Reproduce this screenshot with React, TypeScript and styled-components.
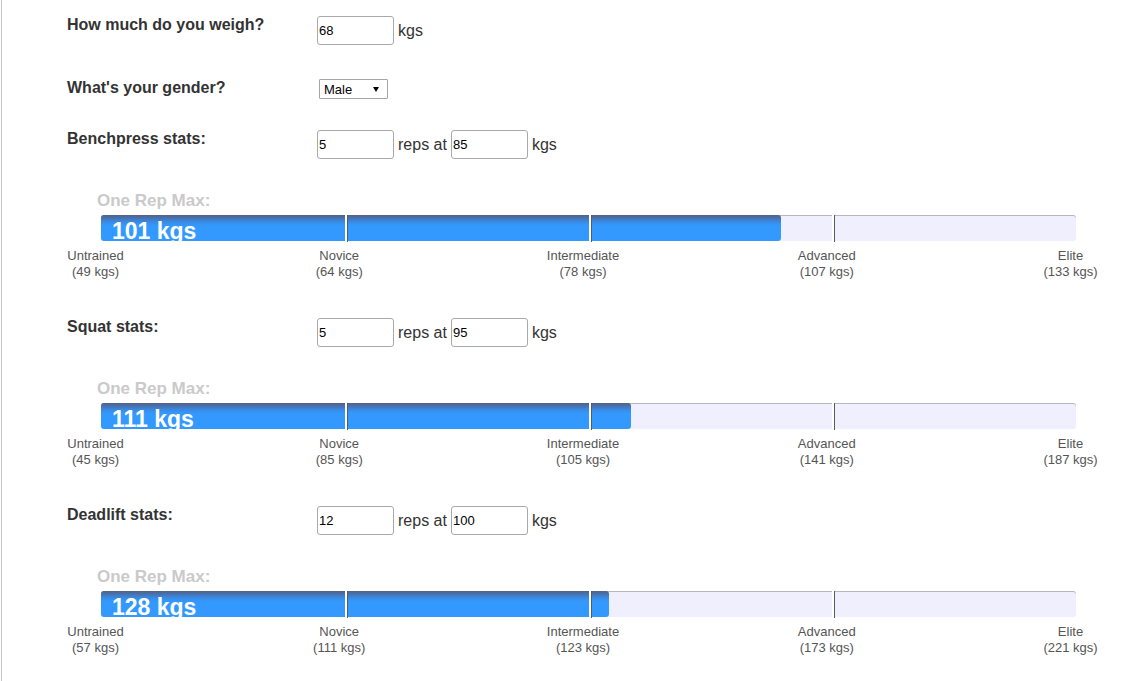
import React from "react";
import styled, { createGlobalStyle } from "styled-components";

const GlobalStyle = createGlobalStyle`
  html, body { margin: 0; padding: 0; background: #fff; }
  body { font-family: "Liberation Sans", Arial, sans-serif; color: #333; }
`;

const Page = styled.div`
  box-sizing: border-box;
  min-height: 100vh;
  margin-left: 1px;
  border-left: 1px solid #c4c4c4;
  padding: 16px 0 0 65px;
  overflow: hidden;
`;

const Row = styled.div<{ $gap?: number }>`
  display: grid;
  grid-template-columns: 250px auto;
  align-items: start;
  margin-bottom: ${(p) => p.$gap ?? 0}px;
`;

const Question = styled.label`
  font-size: 16px;
  font-weight: bold;
  line-height: 18px;
  color: #333;
`;

const Field = styled.div`
  display: flex;
  align-items: center;
  gap: 4px;
  font-size: 16px;
  line-height: 18px;
  color: #333;
`;

const NumInput = styled.input`
  box-sizing: border-box;
  width: 77px;
  height: 29px;
  margin: 0;
  padding: 0 1px;
  border: 1px solid #a9a9a9;
  border-radius: 3px;
  font-family: "Liberation Sans", Arial, sans-serif;
  font-size: 13px;
  color: #000;
  background: #fff;
  outline: none;
`;

const SelectWrap = styled.div`
  position: relative;
  margin-left: 2px;
  width: 69px;
  height: 20px;
`;

const Select = styled.select`
  box-sizing: border-box;
  appearance: none;
  -webkit-appearance: none;
  width: 69px;
  height: 20px;
  margin: 0;
  padding: 0 0 0 4px;
  border: 1px solid #a6a6a6;
  border-radius: 1px;
  background: #fff;
  font-family: "Liberation Sans", Arial, sans-serif;
  font-size: 13px;
  color: #000;
  outline: none;
`;

const Arrow = styled.span`
  position: absolute;
  right: 9px;
  top: 8px;
  width: 0;
  height: 0;
  border-left: 3px solid transparent;
  border-right: 3px solid transparent;
  border-top: 5px solid #000;
  pointer-events: none;
`;

const Lift = styled.section`
  margin-bottom: 38px;
`;

const OrmTitle = styled.div`
  margin: 32px 0 0 30px;
  font-size: 17px;
  font-weight: bold;
  line-height: 20px;
  color: #cacaca;
`;

const Track = styled.div`
  position: relative;
  width: 975px;
  height: 26px;
  margin: 4px 0 0 34px;
  background: #efeffd;
  border-radius: 3px;
  box-shadow: inset 0 1px 0 #b6b6be;
`;

const Fill = styled.div`
  box-sizing: border-box;
  height: 100%;
  border-radius: 3px;
  background: linear-gradient(
    to bottom,
    #56617e 0%,
    #4672b4 12%,
    #3a8ae2 26%,
    #3399ff 40%,
    #3399ff 100%
  );
  overflow: hidden;
  padding-left: 11px;
  color: #fff;
  font-size: 23px;
  font-weight: bold;
  line-height: 32px;
  white-space: nowrap;
`;

const Marker = styled.span<{ $at: number }>`
  position: absolute;
  top: 0;
  bottom: -1px;
  left: ${(p) => p.$at}%;
  width: 2px;
  background: #fff;
  border-right: 1px solid #5a5a5a;
`;

const Ticks = styled.div`
  display: grid;
  grid-template-columns: repeat(5, 243.75px);
  margin: 7px 0 0 -93.4px;
  font-size: 13px;
  line-height: 16px;
  color: #555;
  text-align: center;
`;

const Tick = styled.div`
  white-space: nowrap;
`;

type LiftData = {
  name: string;
  reps: string;
  weight: string;
  max: number;
  fill: number;
  levels: number[];
};

const LEVEL_NAMES = ["Untrained", "Novice", "Intermediate", "Advanced", "Elite"];

const LIFTS: LiftData[] = [
  { name: "Benchpress stats:", reps: "5", weight: "85", max: 101, fill: 680, levels: [49, 64, 78, 107, 133] },
  { name: "Squat stats:", reps: "5", weight: "95", max: 111, fill: 530, levels: [45, 85, 105, 141, 187] },
  { name: "Deadlift stats:", reps: "12", weight: "100", max: 128, fill: 508, levels: [57, 111, 123, 173, 221] },
];

export default function App() {
  return (
    <>
      <GlobalStyle />
      <Page>
        <Row $gap={34}>
          <Question>How much do you weigh?</Question>
          <Field>
            <NumInput defaultValue="68" />
            <span>kgs</span>
          </Field>
        </Row>
        <Row $gap={31}>
          <Question>What's your gender?</Question>
          <SelectWrap>
            <Select defaultValue="Male">
              <option>Male</option>
              <option>Female</option>
            </Select>
            <Arrow />
          </SelectWrap>
        </Row>
        {LIFTS.map((lift) => (
          <Lift key={lift.name}>
            <Row>
              <Question>{lift.name}</Question>
              <Field>
                <NumInput defaultValue={lift.reps} />
                <span>reps at</span>
                <NumInput defaultValue={lift.weight} />
                <span>kgs</span>
              </Field>
            </Row>
            <OrmTitle>One Rep Max:</OrmTitle>
            <Track>
              <Fill style={{ width: `${lift.fill}px` }}>{lift.max} kgs</Fill>
              <Marker $at={25} />
              <Marker $at={50} />
              <Marker $at={75} />
            </Track>
            <Ticks>
              {LEVEL_NAMES.map((lvl, i) => (
                <Tick key={lvl}>
                  {lvl}
                  <br />({lift.levels[i]} kgs)
                </Tick>
              ))}
            </Ticks>
          </Lift>
        ))}
      </Page>
    </>
  );
}
